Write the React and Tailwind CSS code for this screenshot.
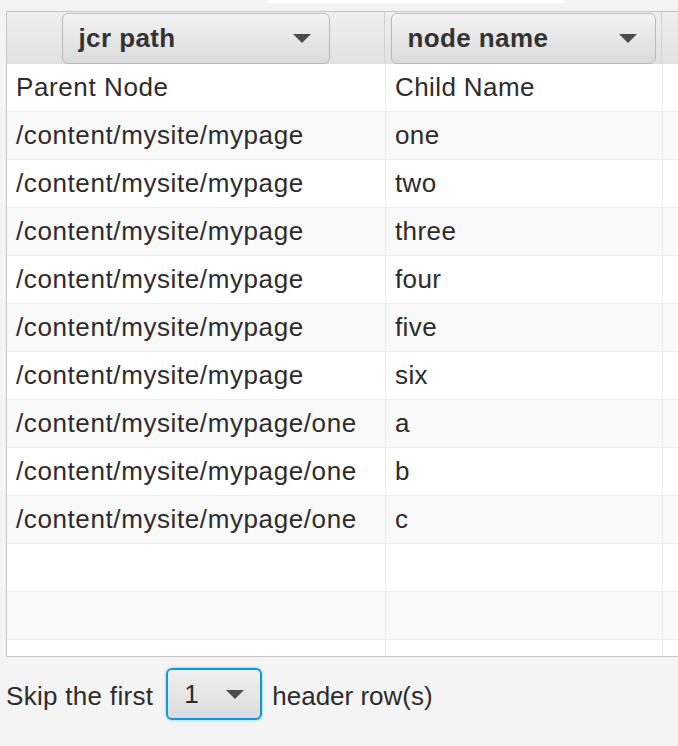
import React from "react";

const rows = [
  ["Parent Node", "Child Name"],
  ["/content/mysite/mypage", "one"],
  ["/content/mysite/mypage", "two"],
  ["/content/mysite/mypage", "three"],
  ["/content/mysite/mypage", "four"],
  ["/content/mysite/mypage", "five"],
  ["/content/mysite/mypage", "six"],
  ["/content/mysite/mypage/one", "a"],
  ["/content/mysite/mypage/one", "b"],
  ["/content/mysite/mypage/one", "c"],
  ["", ""],
  ["", ""],
  ["", ""],
];

function Arrow() {
  return (
    <svg width="18" height="9" viewBox="0 0 18 9">
      <path d="M0 0 L18 0 L9 9 Z" fill="#4d4d4d" />
    </svg>
  );
}

function HeaderCell({ label, width, btnWidth }) {
  return (
    <div
      className={`${width} h-full flex items-end justify-center border-r border-[#d2d2d2] bg-gradient-to-b from-[#efefef] to-[#e2e2e2]`}
    >
      <div
        className={`${btnWidth} h-[51px] flex items-center justify-between pl-[16px] pr-[18px] rounded-[6px] border border-[#b9b9b9] bg-gradient-to-b from-[#f2f2f2] to-[#dcdcdc] shadow-[inset_0_1px_0_#fbfbfb]`}
      >
        <span className="text-[26px] tracking-[0.4px] font-bold text-[#333]">{label}</span>
        <Arrow />
      </div>
    </div>
  );
}

export default function App() {
  return (
    <div
      className="w-[678px] h-[746px] overflow-hidden bg-[#f4f4f4] text-[#2c2c2c]"
      style={{ fontFamily: '"Liberation Sans", Arial, sans-serif' }}
    >
      <div className="ml-[267px] w-[298px] h-[3px] bg-white rounded-b-[6px]" />

      <div className="mt-[8px] ml-[6px] w-[720px] h-[646px] overflow-hidden border border-[#c4c4c4] bg-white">
        <div className="flex h-[52px]">
          <HeaderCell label="jcr path" width="w-[378px]" btnWidth="w-[268px]" />
          <HeaderCell label="node name" width="w-[277px]" btnWidth="w-[265px]" />
          <div className="flex-1 h-full bg-gradient-to-b from-[#efefef] to-[#e2e2e2]" />
        </div>

        {rows.map((r, i) => (
          <div
            key={i}
            className={`flex h-[48px] border-b border-[#ececec] ${i % 2 === 0 ? "bg-white" : "bg-[#f9f9f9]"}`}
          >
            <div className="w-[379px] flex items-center pl-[9px] border-r border-[#ececec] text-[26px] tracking-[0.6px] whitespace-nowrap">
              {r[0]}
            </div>
            <div className="w-[277px] flex items-center pl-[9px] border-r border-[#ececec] text-[26px] tracking-[0.4px] whitespace-nowrap">
              {r[1]}
            </div>
            <div className="flex-1" />
          </div>
        ))}
      </div>

      <div className="flex items-center mt-[11px] pl-[6px] text-[26px]">
        <span className="tracking-[0.3px] pt-[4px]">Skip the first</span>
        <div className="ml-[13px] w-[96px] h-[52px] flex items-center justify-between pl-[16px] pr-[16px] rounded-[6px] border-2 border-[#0a9ad6] bg-gradient-to-b from-[#f0f0f0] to-[#dcdcdc] shadow-[0_0_3px_#7fc6ea]">
          <span>1</span>
          <Arrow />
        </div>
        <span className="ml-[10px] pt-[4px]">header row(s)</span>
      </div>
    </div>
  );
}
